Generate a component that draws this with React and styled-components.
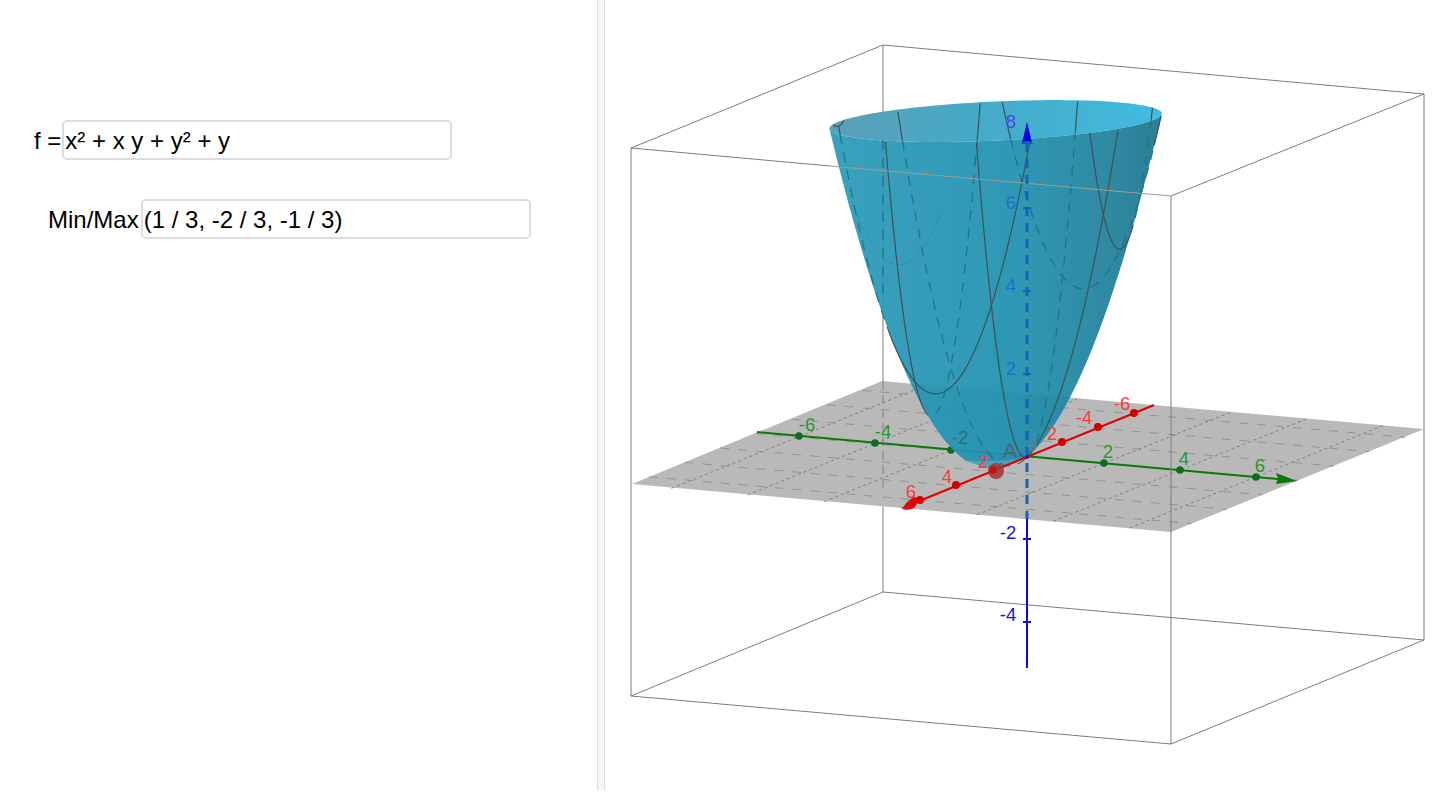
import styled, { createGlobalStyle } from "styled-components";

const ZMAX = 8.1;

// orthographic projection read off the axis ticks
function project(x, y, z) {
    return [1027 - 17.8 * x + 38.2 * y, 457 + 7.2 * x + 3.3 * y - 41.5 * z];
}

function levelPoint(z, t) {
    const r = Math.sqrt(Math.max(0, z + 1 / 3));
    const s = r * (2 / Math.sqrt(3)) * Math.cos(t);
    const d = 2 * r * Math.sin(t);
    return [1 / 3 + (s + d) / 2, -2 / 3 + (s - d) / 2, z];
}

const toPath = (pts) => pts.map((p, i) => `${i ? "L" : "M"}${p[0].toFixed(1)} ${p[1].toFixed(1)}`).join(" ");
const surf = (x, y) => x * x + x * y + y * y + y;

const T0 = Math.atan2(-161.6, 34);

function frontArc(z) {
    const pts = [];
    for (let i = 0; i <= 80; i++) {
        pts.push(project(...levelPoint(z, T0 + (Math.PI * i) / 80)));
    }
    return pts;
}

// outline of the bowl between level zTop and its lowest point
function outline(zTop) {
    const pts = [];
    for (let i = 0; i <= 60; i++) {
        const z = zTop - ((zTop + 1 / 3) * (i * i)) / 3600;
        pts.push(project(...levelPoint(z, T0 + Math.PI)));
    }
    for (let i = 60; i >= 0; i--) {
        const z = zTop - ((zTop + 1 / 3) * (i * i)) / 3600;
        pts.push(project(...levelPoint(z, T0)));
    }
    return pts;
}

const frontRim = frontArc(ZMAX);
const backRim = [];
for (let i = 0; i <= 80; i++) {
    backRim.push(project(...levelPoint(ZMAX, T0 + Math.PI + (Math.PI * i) / 80)));
}

const BODY_PATH = toPath([...outline(ZMAX), ...frontRim]) + " Z";
const MOUTH_PATH = toPath([...frontRim, ...backRim]) + " Z";
const BELOW_PLANE_PATH = toPath([...outline(0), ...frontArc(0)]) + " Z";

function rimYAt(X) {
    let best = frontRim[0];
    for (const p of frontRim) {
        if (Math.abs(p[0] - X) < Math.abs(best[0] - X)) best = p;
    }
    return best[1];
}

function isHidden(x, y) {
    const facing = 38.2 * (2 * x + y) + 17.8 * (x + 2 * y + 1) - 7.95 > 0;
    if (facing) return false;
    const [X, Y] = project(x, y, surf(x, y));
    return Y > rimYAt(X);
}

function traceCurve(at, from = -7.1, to = 7.1) {
    const solid = [];
    const dashed = [];
    let run = [];
    let hiddenRun = null;
    const flush = () => {
        if (run.length > 1) (hiddenRun ? dashed : solid).push(toPath(run));
        run = [];
    };
    for (let a = from; a <= to; a += 0.02) {
        const [x, y] = at(a);
        const z = surf(x, y);
        if (z > ZMAX) {
            flush();
            hiddenRun = null;
            continue;
        }
        const hidden = isHidden(x, y);
        if (hiddenRun !== null && hidden !== hiddenRun) {
            const last = run[run.length - 1];
            flush();
            run = [last];
        }
        hiddenRun = hidden;
        run.push(project(x, y, z));
    }
    flush();
    return { solid, dashed };
}

const curves = [
    ...[-2, 0, 2].map((k) => traceCurve((a) => [k, a])),
    ...[-4, -2, 0, 2].map((k) => traceCurve((a) => [a, k])),
];
const faintCurve = traceCurve((a) => [3, a], -3.2, -0.8);

const gridValues = [-6, -4, -2, 0, 2, 4, 6];
const segment = (a, b) => toPath([project(...a), project(...b)]);

const redTicks = [[1134, 413], [1098, 427], [1062, 442], [993, 470], [956, 485], [920, 500]];
const greenTicks = [[799, 436], [875, 443], [951, 450], [1104, 463], [1180, 470], [1256, 477]];

const redLabels = [
    ["-6", 1122, 410], ["-4", 1084, 424], ["2", 1052, 440],
    ["2", 983, 468], ["4", 947, 483], ["6", 911, 498],
];
const greenLabels = [
    ["-6", 807, 431], ["-4", 883, 438], ["2", 1108, 458], ["4", 1184, 465], ["6", 1260, 472],
];

export default function App() {
    return (
        <Page>
            <GlobalStyle />
            <LeftPanel>
                <Row $indent={34} $gap={1}>
                    <Label>f =</Label>
                    <Field readOnly value="x² + x y + y² + y" />
                </Row>
                <Row $indent={48} $gap={2}>
                    <Label>Min/Max</Label>
                    <Field readOnly value="(1 / 3, -2 / 3, -1 / 3)" />
                </Row>
            </LeftPanel>
            <Splitter />
            <GraphPanel>
                <GraphSvg viewBox="605 0 847 790">
                    <defs>
                        <linearGradient id="body" x1="831" x2="1163" y1="0" y2="0" gradientUnits="userSpaceOnUse">
                            <stop offset="0" stopColor="#2b9ab8" />
                            <stop offset="0.55" stopColor="#1f90b0" />
                            <stop offset="0.85" stopColor="#1f8099" />
                            <stop offset="1" stopColor="#1b738d" />
                        </linearGradient>
                        <linearGradient id="mouth" x1="831" x2="1163" y1="0" y2="0" gradientUnits="userSpaceOnUse">
                            <stop offset="0" stopColor="#5b9fb5" />
                            <stop offset="0.4" stopColor="#46a9c6" />
                            <stop offset="1" stopColor="#41bbdf" />
                        </linearGradient>
                    </defs>

                    <BoxEdge d="M883 45 L883 592 M883 592 L631 696 M883 592 L1424 640" />
                    <path d="M632 484 L882 381 L1424 429 L1171 532 Z" fill="#b9b9b9" />
                    <HiddenEdge d="M883 381 L883 490" />

                    {gridValues.map((k) => (
                        <g key={k}>
                            <GridDots d={segment([7.1, k, 0], [-7.1, k, 0])} />
                            <GridDashes d={segment([k, -7.1, 0], [k, 7.1, 0])} />
                        </g>
                    ))}

                    <AxisLine d="M757 432 L1278 479" $color="#0a7a0a" />
                    <path d="M1297 481 L1276 473 L1278 478 L1276 484 Z" fill="#0a7a0a" />
                    {greenTicks.map(([x, y]) => <circle key={x} cx={x} cy={y} r="3.8" fill="#0f6e1d" />)}

                    <path d={MOUTH_PATH} fill="url(#mouth)" />
                    <path d={BODY_PATH} fill="url(#body)" fillOpacity="0.93" />
                    <path d={BELOW_PLANE_PATH} fill="#b9b9b9" fillOpacity="0.3" />

                    {[...faintCurve.solid, ...faintCurve.dashed].map((d) => <FaintCurve key={d} d={d} />)}
                    {curves.map((c, i) => (
                        <g key={i}>
                            {c.dashed.map((d) => <SurfaceDash key={d} d={d} />)}
                            {c.solid.map((d) => <SurfaceLine key={d} d={d} />)}
                        </g>
                    ))}
                    <SurfaceDash d="M883 140 L883 300" />

                    <BoxEdge d="M631 148 L631 696 L1171 744 L1171 196 M631 148 L883 45 L1424 94 L1171 196 M1424 94 L1424 640 L1171 744" />
                    <path d="M631 148 L830 166" stroke="#7c7c7c" strokeWidth="1" />
                    <path d="M830 166 L1171 196" stroke="#a09c90" strokeWidth="1" />

                    <ZDash d="M1027 143 L1027 519" />
                    <AxisLine d="M1027 519 L1027 668" $color="#0a0ae6" />
                    <path d="M1027 122 L1022 143 L1032 143 Z" fill="#0505e0" />
                    <path d="M1021 144 a6 3 0 0 1 12 0 Z" fill="#155fb0" />
                    <AxisLine d="M1023 208 L1031 208 M1023 291 L1031 291 M1023 374 L1031 374" $color="#1565b5" />
                    <AxisLine d="M1023 539 L1031 539 M1023 622 L1031 622" $color="#0a0ae6" />

                    <AxisLine d="M912 504 L1154 405" $color="#e00000" />
                    <path d="M902 509 C906 503 910 498 915 497 C919 498 918 504 914 508 C910 510 906 510 902 509 Z" fill="#d80a0a" />
                    {redTicks.map(([x, y]) => <circle key={x} cx={x} cy={y} r="4" fill="#d40000" />)}
                    <circle cx="996" cy="471" r="8" fill="#a23a3a" fillOpacity="0.9" />
                    <circle cx="993" cy="470" r="3.5" fill="#c81010" />
                    <circle cx="1027" cy="457" r="2" fill="#1020c0" />

                    <AxisText x="1010" y="458" $size={22} $color="#4d6672">A</AxisText>
                    <AxisText x="1032" y="451" $size={18} $color="#5e7f8a">0</AxisText>
                    <AxisText x="960" y="444" $color="#2f7078">-2</AxisText>
                    {redLabels.map(([t, x, y]) => <AxisText key={x} x={x} y={y} $color="#fa3c3c">{t}</AxisText>)}
                    {greenLabels.map(([t, x, y]) => <AxisText key={x} x={x} y={y} $color="#2e962e">{t}</AxisText>)}
                    <AxisText x="1011" y="128" $color="#4848f0">8</AxisText>
                    <AxisText x="1011" y="209" $color="#1f6fc4">6</AxisText>
                    <AxisText x="1011" y="292" $color="#1f6fc4">4</AxisText>
                    <AxisText x="1011" y="375" $color="#1f6fc4">2</AxisText>
                    <AxisText x="1008" y="539" $color="#1414e6">-2</AxisText>
                    <AxisText x="1008" y="621" $color="#1414e6">-4</AxisText>
                </GraphSvg>
            </GraphPanel>
        </Page>
    );
}

const GlobalStyle = createGlobalStyle`
    body{
        margin: 0;
        background: #FFFFFF;
        font-family: "Liberation Sans", Arial, sans-serif;
    }
`;
const Page = styled.div`
    height: 790px;
    display: flex;
    overflow: hidden;
`;
const LeftPanel = styled.div`
    width: 597px;
    flex-shrink: 0;
    box-sizing: border-box;
    padding-top: 120px;
    display: flex;
    flex-direction: column;
    gap: 39px;
`;
const Row = styled.div`
    display: flex;
    align-items: center;
    gap: ${(props) => props.$gap}px;
    padding-left: ${(props) => props.$indent}px;
`;
const Label = styled.span`
    padding-top: 2px;
    font-size: 24px;
    color: #000000;
`;
const Field = styled.input`
    width: 390px;
    height: 40px;
    box-sizing: border-box;
    padding: 2px 1px 0;
    border: 2px solid #DCDCDC;
    border-radius: 5px;
    outline: none;
    font-family: inherit;
    font-size: 24px;
    color: #000000;
`;
const Splitter = styled.div`
    width: 8px;
    flex-shrink: 0;
    box-sizing: border-box;
    background: #F5F5F5;
    border-left: 1px solid #DCDCDC;
    border-right: 1px solid #DCDCDC;
`;
const GraphPanel = styled.div`
    flex: 1;
`;
const GraphSvg = styled.svg`
    display: block;
    width: 100%;
    height: 100%;
`;
const BoxEdge = styled.path`
    fill: none;
    stroke: #7c7c7c;
    stroke-width: 1;
`;
const HiddenEdge = styled.path`
    fill: none;
    stroke: #808080;
    stroke-width: 1;
    stroke-dasharray: 9 5;
`;
const GridDots = styled.path`
    fill: none;
    stroke: #808080;
    stroke-width: 1;
    stroke-dasharray: 3 3;
`;
const GridDashes = styled.path`
    fill: none;
    stroke: #949494;
    stroke-width: 1;
    stroke-dasharray: 9 9;
`;
const AxisLine = styled.path`
    fill: none;
    stroke: ${(props) => props.$color};
    stroke-width: 2;
`;
const ZDash = styled.path`
    fill: none;
    stroke: #1565b0;
    stroke-width: 3;
    stroke-dasharray: 9 7;
`;
const SurfaceLine = styled.path`
    fill: none;
    stroke: #3c5258;
    stroke-width: 1.2;
`;
const SurfaceDash = styled.path`
    fill: none;
    stroke: #1f7188;
    stroke-width: 1.2;
    stroke-dasharray: 10 8;
`;
const FaintCurve = styled.path`
    fill: none;
    stroke: #1f7188;
    stroke-width: 1;
    opacity: 0.25;
`;
const AxisText = styled.text`
    font-family: "Liberation Sans", Arial, sans-serif;
    font-size: ${(props) => props.$size || 18.5}px;
    fill: ${(props) => props.$color};
    text-anchor: middle;
`;
